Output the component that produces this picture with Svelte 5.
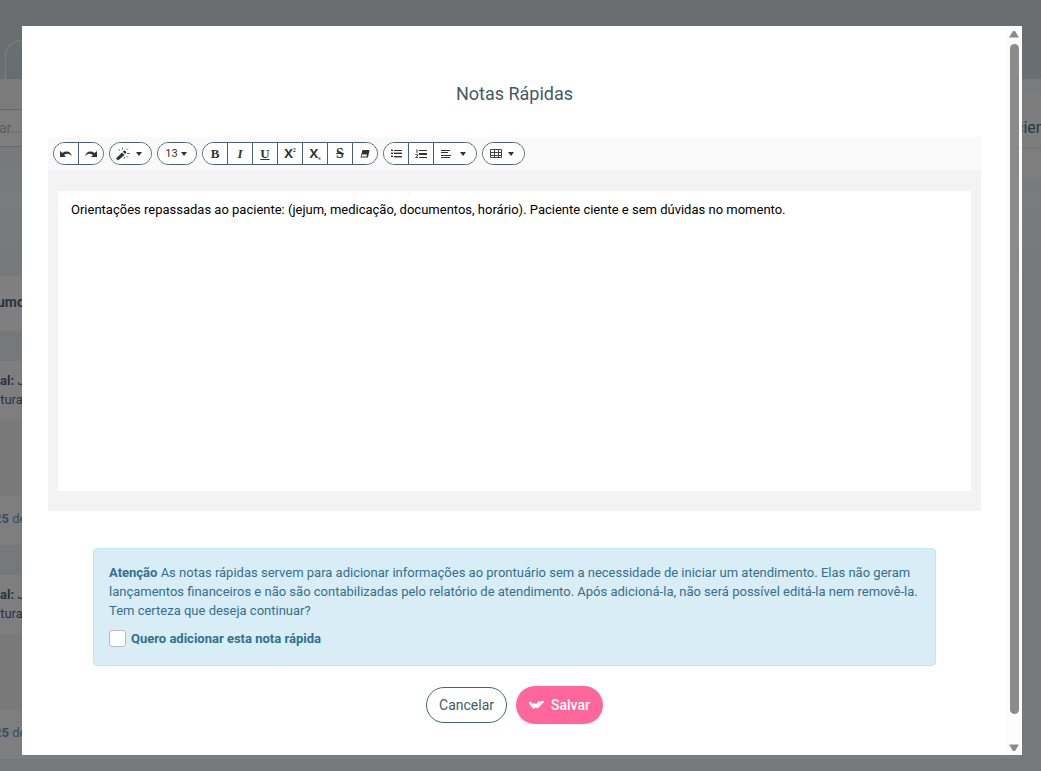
<script>
  let note = $state('Orientações repassadas ao paciente: (jejum, medicação, documentos, horário). Paciente ciente e sem dúvidas no momento.');
  let confirmed = $state(false);
  const records = [1, 2];
</script>

{#snippet caret()}
  <svg class="caret" viewBox="0 0 6 4" width="6" height="4" aria-hidden="true"><path d="M0 0h6L3 4z" /></svg>
{/snippet}

<div class="page" inert>
  <div class="topbar"><div class="tab"></div></div>
  <div class="columns">
    <div class="left">
      <div class="search">ar...</div>
      <div class="summary">umo</div>
      {#each records as record (record)}
        <div class="record">
          <div class="who"><b>al:</b> J<div class="name">itura</div></div>
          <div class="date"><b>25</b> de</div>
        </div>
      {/each}
    </div>
    <div class="right"><div class="patient">cien</div><div class="below"></div></div>
  </div>
</div>

<div class="overlay">
  <div class="dialog" role="dialog" aria-modal="true" aria-labelledby="title">
    <h1 id="title">Notas Rápidas</h1>

    <div class="editor">
      <div class="toolbar" role="toolbar" aria-label="Formatação">
        <div class="group">
          <button aria-label="Desfazer"><svg viewBox="0 0 14 10" width="14" height="10"><path d="M1 2v6h6L5 6c3-2 6-1.500 8 1.500C12 3 8 1 3.500 4z" /></svg></button>
          <button aria-label="Refazer"><svg viewBox="0 0 14 10" width="14" height="10"><path d="M13 2v6H7l2-2C6 4 3 4.500 1 7.500 2 3 6 1 10.500 4z" /></svg></button>
        </div>
        <div class="group">
          <button class="wide" aria-label="Estilo">
            <svg viewBox="0 0 14 14" width="14" height="14"><path d="M0 11.500l6-6L8.500 8l-6.500 5.500z" /><path d="M6.800 4.800l1.700-1.500 2 2L9 7z" /><path class="spark" d="M6.500.5v2M2.500 2.500l1.500 1M10.500 3L12 1.500M11 6.500h3M10.500 9l1.500 1.500M8.500 10v1.500" /></svg>
            {@render caret()}
          </button>
        </div>
        <div class="group">
          <button class="size" aria-label="Tamanho da fonte">13 {@render caret()}</button>
        </div>
        <div class="group">
          <button class="serif" aria-label="Negrito">B</button>
          <button class="serif italic" aria-label="Itálico">I</button>
          <button class="serif underline" aria-label="Sublinhado">U</button>
          <button class="script" aria-label="Sobrescrito">X<sup>2</sup></button>
          <button class="script" aria-label="Subscrito">X<sub>s</sub></button>
          <button class="serif strike" aria-label="Tachado">S</button>
          <button aria-label="Remover formatação"><svg viewBox="0 0 10 9" width="10" height="9"><path fill-rule="evenodd" d="M2.500 1H9.500L8 8.500H.5zM2 5.500L1.500 7.500h5l.6-2z" /></svg></button>
        </div>
        <div class="group">
          <button aria-label="Lista"><svg viewBox="0 0 12 10" width="12" height="10"><path d="M1 1h2v1H1zM1 4h2v1H1zM1 7h2v1H1zM4 1h8v1H4zM4 4h8v1H4zM4 7h8v1H4z" /><path opacity=".4" d="M1 0h2v1H1zM1 3h2v1H1zM1 6h2v1H1zM4 3h8v1H4zM4 8h8v1H4z" /></svg></button>
          <button aria-label="Lista numerada"><svg viewBox="0 0 12 10" width="12" height="10"><path d="M4 1h8v1H4zM4 4h8v2H4zM4 8h8v1H4z" /><path class="digit" d="M1 1h1v3M0.500 5.500h2v1.500l-2 1.500h2.500" /></svg></button>
          <button class="wide" aria-label="Parágrafo">
            <svg viewBox="0 0 12 10" width="12" height="10"><path d="M1 1h9v1H1zM1 3h7v1H1zM1 6h10v1H1zM1 8h9v1H1z" /></svg>
            {@render caret()}
          </button>
        </div>
        <div class="group">
          <button class="wide" aria-label="Tabela">
            <svg viewBox="0 0 12 10" width="12" height="10"><path class="table" d="M.5.5h11v8H.5zM.5 3.500h11M.5 6.500h11M4.500.5v8M8.500.5v8" /></svg>
            {@render caret()}
          </button>
        </div>
      </div>
      <div class="canvas"><textarea bind:value={note} aria-label="Nota" spellcheck="false"></textarea></div>
    </div>

    <div class="alert">
      <p><strong>Atenção</strong> As notas rápidas servem para adicionar informações ao prontuário sem a necessidade de iniciar um atendimento. Elas não geram lançamentos financeiros e não são contabilizadas pelo relatório de atendimento. Após adicioná-la, não será possível editá-la nem removê-la. Tem certeza que deseja continuar?</p>
      <label><input type="checkbox" bind:checked={confirmed} />Quero adicionar esta nota rápida</label>
    </div>

    <div class="actions">
      <button class="cancel">Cancelar</button>
      <button class="save">
        <svg viewBox="0 0 16 10" width="16" height="10" aria-hidden="true"><path d="M.5 3L2.500 1.500 5 4l1.500-1L8 4l2.500-3 1.500 1L15 .5 16 2 9.500 8.500 8 7.500 5.500 9z" /></svg>Salvar
      </button>
    </div>
  </div>
  <div class="scrollbar" aria-hidden="true">
    <svg viewBox="0 0 10 7" width="10" height="7"><path d="M4 0h2l4 6.500H0z" /></svg>
    <div class="track"><div class="thumb"></div></div>
    <svg viewBox="0 0 10 7" width="10" height="7"><path d="M4 7h2L10 .5H0z" /></svg>
  </div>
</div>

<style>
  :global(body) { margin: 0; background: #77787a; }
  .page, .overlay { font-family: Roboto, "Liberation Sans", sans-serif; font-size: 13px; }
  .page { height: 100vh; overflow: hidden; color: #28343c; }
  .topbar { box-sizing: border-box; height: 79px; padding: 40px 0 0 5px; background: linear-gradient(#6b6c6d 20%, #677074); }
  .tab { box-sizing: border-box; width: 80px; height: 39px; border: 1px solid #788084; border-width: 1px 0 0 1px; border-radius: 16px 0 0 0; background: linear-gradient(#697073, #646d71); }
  .columns { display: flex; justify-content: space-between; background: linear-gradient(#7a7b7c, #77787a 60px, #7a7b7d 120px, #77787a 220px); }
  .left { flex: 1; padding-top: 30px; background: linear-gradient(#7b7b7c 30px, transparent 30px); }
  .search { box-sizing: border-box; height: 38px; border: solid #666; border-width: 1px 0; background: #7e7e7e; color: #5d5d5d; font-size: 14px; line-height: 36px; text-indent: -1px; }
  .summary { height: 55px; margin: 129px 0 30px; background: #7f7f7f; font-size: 14px; font-weight: 700; line-height: 52px; text-indent: -3px; }
  .record { height: 184px; margin-bottom: 29px; border-bottom: 1px solid #737779; background: linear-gradient(#7e7e7e 59px, #797979 59px, #797979 135px, #7e7e7e 135px); display: flex; flex-direction: column; justify-content: space-between; }
  .who { padding-top: 10px; line-height: 19px; }
  .name { text-indent: -3px; }
  .date { height: 34px; color: #34505f; text-indent: -6px; }
  .right { width: 21px; padding-top: 15px; }
  .patient { height: 54px; border-bottom: 1px solid #747474; background: #7d7d7d; font-size: 16px; line-height: 68px; color: #243946; text-indent: -5px; }
  .below { height: 29px; background: #7e7e7e; }

  .overlay { position: fixed; inset: 26px 19px 16px 22px; display: flex; background: #fff; }
  .dialog { flex: 1; min-width: 0; box-sizing: border-box; padding: 56px 25px 0 26px; }
  h1 { margin: 0 0 31px; text-align: center; font-size: 18px; font-weight: 400; line-height: 24px; color: #455a64; }
  .editor { background: #f3f3f3; }
  .toolbar { display: flex; flex-wrap: wrap; gap: 5px; padding: 5px 5px 6px; background: #f9f9f9; }
  .group { display: flex; overflow: hidden; border: 1px solid #44636f; border-radius: 12px; background: #fff; }
  button { font-family: inherit; cursor: pointer; }
  .group button { box-sizing: border-box; display: flex; align-items: center; justify-content: center; width: 25px; height: 21px; padding: 0; border: 0; background: #fff; color: #333; font-size: 11px; }
  .group button + button { border-left: 1px solid #44636f; }
  .group button:first-child:not(:only-child) { width: 24px; }
  .group .wide { width: 41px; gap: 6px; padding-right: 4px; }
  .group button + .wide { width: 43px; gap: 8px; padding-right: 4px; }
  .group .size { width: 38px; gap: 3px; padding-right: 2px; }
  .group svg { fill: #333; }
  .group .spark, .group .digit, .group .table { fill: none; stroke: #444; stroke-width: 1; }
  .group .spark { stroke: #667; }
  .group .serif { font-family: "Liberation Serif", serif; font-size: 13px; font-weight: 700; }
  .group .italic { font-style: italic; }
  .group .underline { text-decoration: underline; }
  .group .strike { font-size: 14px; text-decoration: line-through; }
  .group .script { font-family: "Open Sans", sans-serif; font-size: 13px; font-weight: 700; line-height: 21px; }
  sup, sub { font-family: "Liberation Serif", serif; font-size: 6px; line-height: 1; }
  sup { align-self: flex-start; padding-top: 4px; }
  sub { align-self: flex-end; padding-bottom: 3px; }
  .canvas { padding: 20px 10px; }
  textarea { display: block; box-sizing: border-box; width: 100%; height: 300px; padding: 10px 13px; border: 0; outline: 0; resize: none; background: #fff; color: #000; font: inherit; line-height: 18px; }
  .alert { margin: 37px 45px 20px; padding: 14px 15px 17px; border: 1px solid #bce8f1; border-radius: 4px; background: #d9edf7; color: #31708f; }
  .alert p { margin: 0 0 9px; line-height: 19px; }
  .alert label { display: flex; align-items: center; gap: 5px; height: 19px; font-weight: 700; }
  .alert input { appearance: none; box-sizing: border-box; width: 17px; height: 17px; margin: 0; border: 1px solid #bbb; border-radius: 3px; background: #fff; }
  .alert input:checked { background: #31708f; }
  .actions { display: flex; align-items: center; justify-content: center; gap: 9px; }
  .actions button { box-sizing: border-box; display: flex; align-items: center; justify-content: center; border-radius: 19px; font-size: 14px; }
  .cancel { height: 36px; padding: 0 12px; border: 1px solid #44636f; background: #fff; color: #455a64; }
  .save { height: 38px; padding: 0 13px 0 12px; gap: 7px; border: 0; background: #ff6699; color: #fff; font-weight: 500; }
  .save svg { fill: #fff; }
  .scrollbar { box-sizing: border-box; display: flex; flex-direction: column; align-items: center; width: 16px; padding: 5px 0 4px; background: #fcfcfc; }
  .scrollbar svg { fill: #8b8b8b; }
  .track { flex: 1; padding: 6px 0 30px; }
  .thumb { width: 9px; height: 100%; border-radius: 5px; background: #8b8b8b; }
</style>
